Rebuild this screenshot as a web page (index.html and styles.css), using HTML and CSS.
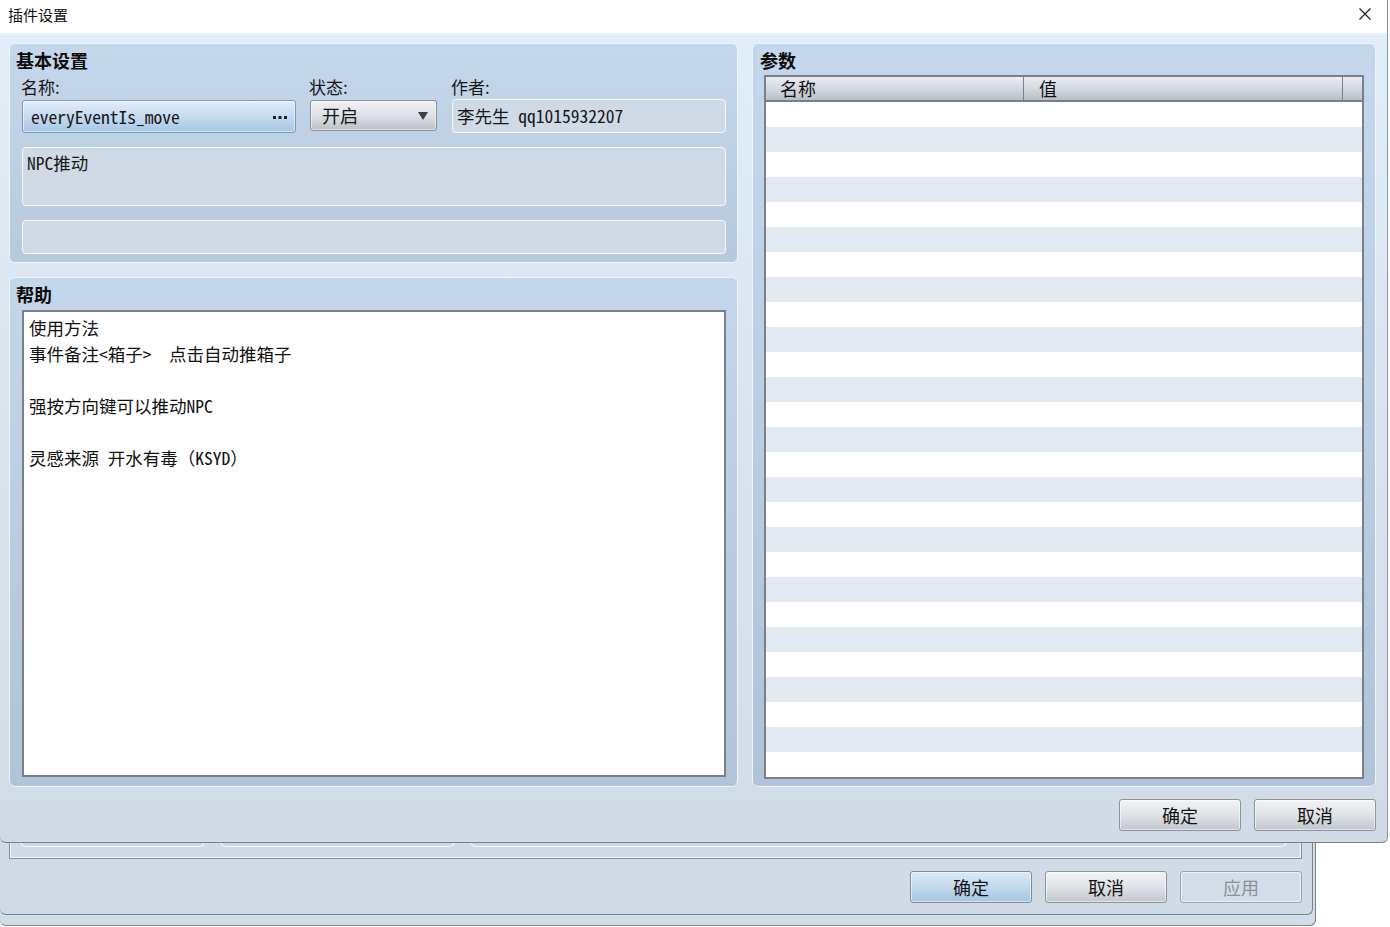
FILE: index.html
```html
<!DOCTYPE html>
<html lang="zh-CN">
<head>
    <meta charset="UTF-8">
    <title>插件设置</title>
    <link rel="stylesheet" href="styles.css">
</head>
<body>
    <!-- windows lying under the plugin dialog -->
    <div class="window window-back"></div>
    <div class="window window-main">
        <div class="tab-panel">
            <div class="tab-box box-list"></div>
            <div class="tab-box box-info"></div>
            <div class="tab-box box-help"></div>
        </div>
        <div class="button-row">
            <button class="btn btn-default">确定</button>
            <button class="btn">取消</button>
            <button class="btn" disabled>应用</button>
        </div>
    </div>

    <div class="dialog">
        <div class="titlebar">
            <span class="title">插件设置</span>
            <svg class="close" width="14" height="14" viewBox="0 0 14 14">
                <path d="M1.5 1.5 L12.5 12.5 M12.5 1.5 L1.5 12.5" stroke="#1f1f1f" stroke-width="1.2" fill="none"/>
            </svg>
        </div>

        <div class="dialog-body">
            <div class="columns">
                <div class="left-col">
                    <section class="group group-basic">
                        <h2 class="group-title">基本设置</h2>
                        <div class="fields">
                            <div class="field">
                                <label>名称:</label>
                                <div class="name-input">
                                    <span class="mono">everyEventIs_move</span>
                                    <svg class="dots" width="14" height="3" viewBox="0 0 14 3">
                                        <rect x="0" y="0" width="3" height="3" fill="#222"/>
                                        <rect x="5.5" y="0" width="3" height="3" fill="#222"/>
                                        <rect x="11" y="0" width="3" height="3" fill="#222"/>
                                    </svg>
                                </div>
                            </div>
                            <div class="field">
                                <label>状态:</label>
                                <div class="select">
                                    <span>开启</span>
                                    <svg class="arrow" width="10" height="8" viewBox="0 0 10 8">
                                        <polygon points="0,0 10,0 5,8" fill="#3b4047"/>
                                    </svg>
                                </div>
                            </div>
                            <div class="field">
                                <label>作者:</label>
                                <div class="text-box author mono">李先生 qq1015932207</div>
                            </div>
                        </div>
                        <div class="text-box desc mono">NPC推动</div>
                        <div class="text-box extra"></div>
                    </section>

                    <section class="group group-help">
                        <h2 class="group-title">帮助</h2>
                        <div class="help-text mono">使用方法
事件备注&lt;箱子&gt;<span class="fw">　</span>点击自动推箱子

强按方向键可以推动NPC

灵感来源 开水有毒<span class="fw">（</span>KSYD<span class="fw">）</span></div>
                    </section>
                </div>

                <section class="group group-params">
                    <h2 class="group-title">参数</h2>
                    <div class="param-table">
                        <div class="param-head">
                            <div class="head-cell col-name">名称</div>
                            <div class="head-cell col-value">值</div>
                            <div class="head-cell col-end"></div>
                        </div>
                        <div class="param-rows">
                            <div class="param-row"></div>
                            <div class="param-row"></div>
                            <div class="param-row"></div>
                            <div class="param-row"></div>
                            <div class="param-row"></div>
                            <div class="param-row"></div>
                            <div class="param-row"></div>
                            <div class="param-row"></div>
                            <div class="param-row"></div>
                            <div class="param-row"></div>
                            <div class="param-row"></div>
                            <div class="param-row"></div>
                            <div class="param-row"></div>
                            <div class="param-row"></div>
                            <div class="param-row"></div>
                            <div class="param-row"></div>
                            <div class="param-row"></div>
                            <div class="param-row"></div>
                            <div class="param-row"></div>
                            <div class="param-row"></div>
                            <div class="param-row"></div>
                            <div class="param-row"></div>
                            <div class="param-row"></div>
                            <div class="param-row"></div>
                            <div class="param-row"></div>
                            <div class="param-row"></div>
                            <div class="param-row"></div>
                        </div>
                    </div>
                </section>
            </div>

            <div class="dialog-buttons">
                <button class="btn">确定</button>
                <button class="btn">取消</button>
            </div>
        </div>
    </div>
</body>
</html>
```

FILE: styles.css
```css
* {
    margin: 0;
    padding: 0;
    box-sizing: border-box;
}
html, body {
    width: 100%;
    height: 100%;
    overflow: hidden;
}
body {
    position: relative;
    background: #ffffff;
    font-family: "Noto Sans CJK SC", "Noto Sans", sans-serif;
    color: #161616;
}

/* half-width latin, like the editor's gothic font */
.mono {
    font-family: "Noto Sans CJK JP", "Noto Sans CJK SC", sans-serif;
    font-feature-settings: "hwid" 1;
    font-size: 17.5px;
}
/* full-width space and brackets stay full width */
.mono .fw {
    font-feature-settings: normal;
}

/* ---------- windows behind ---------- */
.window {
    position: absolute;
    left: 0;
    top: 0;
    border-right: 1px solid #7e838a;
    border-bottom: 1px solid #7e838a;
    border-radius: 0 0 6px 6px;
}
.window-back {
    width: 1316px;
    height: 926px;
    background: #d3dde8;
}
.window-main {
    width: 1313px;
    height: 915px;
    background: #d0dbe6;
    display: flex;
    flex-direction: column;
}
.tab-panel {
    flex: 1;
    margin: 0 10px 0 9px;
    border: 1px solid #868c94;
    border-top: none;
    box-shadow: inset 0 -1px 0 #f3f7fb, inset 1px 0 0 #f3f7fb, inset -1px 0 0 #f3f7fb;
    display: flex;
    align-items: flex-end;
    gap: 15px;
    padding: 0 14px 11px 10px;
}
.tab-box {
    height: 120px;
    border: 1px solid #f4f8fc;
    border-top: none;
    border-radius: 0 0 6px 6px;
    background: #c9d7e5;
}
.box-list { width: 185px; }
.box-info { width: 235px; }
.box-help { flex: 1; }
.button-row {
    display: flex;
    justify-content: flex-end;
    gap: 13px;
    padding: 12px 10px 11px 0;
}

/* ---------- buttons ---------- */
.btn {
    width: 122px;
    height: 32px;
    border: 1px solid #8d939a;
    border-radius: 3px;
    background: linear-gradient(#f1f3f6, #dfe3e7 50%, #c2c7cd);
    box-shadow: inset 0 0 0 1px rgba(255, 255, 255, 0.55);
    font-family: "Noto Sans CJK SC", sans-serif;
    font-size: 18px;
    line-height: 30px;
    color: #141414;
}
.btn-default {
    border-color: #7f8c99;
    background: linear-gradient(#dceaf8, #c3d9ef 50%, #a5c3e3);
}
.btn:disabled {
    background: #d2dde8;
    border-color: #9ba2aa;
    color: #8b9098;
}

/* ---------- plugin dialog ---------- */
.dialog {
    position: absolute;
    left: 0;
    top: 0;
    width: 1388px;
    height: 843px;
    border-right: 1px solid #8c939b;
    border-bottom: 1px solid #7b8088;
    border-radius: 0 0 6px 6px;
    background: linear-gradient(#e3eefb, #d0dbe6);
    display: flex;
    flex-direction: column;
    overflow: hidden;
}
.titlebar {
    height: 33px;
    background: #ffffff;
    display: flex;
    align-items: center;
    justify-content: space-between;
    padding: 0 15px 5px 8px;
}
.title {
    font-size: 15px;
    color: #111;
}
.dialog-body {
    flex: 1;
    padding: 10px 11px 11px 9px;
    display: flex;
    flex-direction: column;
}
.columns {
    height: 744px;
    display: flex;
    gap: 14px;
}
.left-col {
    width: 729px;
    display: flex;
    flex-direction: column;
    gap: 14px;
}

/* group boxes */
.group {
    border: 1px solid #eef4fb;
    border-radius: 6px;
    padding: 0 11px 8px 12px;
    background: linear-gradient(#c5d7ec, #b2c6db);
}
.group-title {
    margin: 4px 0 0 -6px;
    font-size: 18px;
    font-weight: bold;
    line-height: 24px;
    color: #0c0c0c;
}
.group-basic {
    height: 220px;
    background: linear-gradient(#c5d7eb, #b7cadd);
}
.group-help {
    height: 510px;
    padding-bottom: 9px;
    background: linear-gradient(#c4d6ea, #afc3d9);
}
.group-params {
    width: 624px;
    padding: 0 11px 7px 11px;
    background: linear-gradient(#c5d7ec, #afc3d9);
}
.group-params .group-title {
    margin-left: -4px;
}

/* basic settings */
.fields {
    display: grid;
    grid-template-columns: 274px 128px 1fr;
    column-gap: 14px;
    margin-top: 5px;
}
.field label {
    display: block;
    font-size: 17px;
    line-height: 20px;
    margin-left: -1px;
    color: #151515;
}
.name-input {
    margin-top: 3px;
    height: 33px;
    border: 1px solid #7b99ba;
    border-radius: 3px;
    background: linear-gradient(#e2edf9, #c8dcf0 45%, #a9c6e5);
    box-shadow: inset 0 0 0 1px rgba(255, 255, 255, 0.5);
    display: flex;
    align-items: center;
    justify-content: space-between;
    padding: 0 8px 0 8px;
    line-height: 31px;
}
.dots {
    margin-top: 1px;
}
.select {
    margin-top: 3px;
    width: 127px;
    height: 31px;
    border: 1px solid #8a9098;
    border-radius: 3px;
    background: linear-gradient(#eff2f5, #dde1e6 50%, #bcc1c8);
    box-shadow: inset 0 0 0 1px rgba(255, 255, 255, 0.5);
    display: flex;
    align-items: center;
    justify-content: space-between;
    padding: 0 8px 0 11px;
    font-size: 18px;
    line-height: 29px;
}
.text-box {
    border: 1px solid #f5f8fc;
    border-radius: 4px;
    background: #cfdae6;
}
.author {
    margin-top: 2px;
    height: 34px;
    padding-left: 4px;
    line-height: 32px;
}
.desc {
    margin-top: 14px;
    height: 59px;
    padding: 2px 4px;
    line-height: 26px;
}
.extra {
    margin-top: 14px;
    height: 34px;
}

/* help text */
.help-text {
    margin-top: 4px;
    height: 467px;
    border: 2px solid #7a7f88;
    background: #ffffff;
    padding: 3px 5px;
    line-height: 26px;
    white-space: pre;
    color: #111;
}

/* parameter table */
.param-table {
    margin-top: 3px;
    width: 600px;
    height: 704px;
    border: 2px solid #7a7f88;
    background: #ffffff;
}
.param-head {
    display: flex;
    height: 25px;
    border-bottom: 2px solid #7a7f88;
    background: linear-gradient(#e9edf2, #d3d9e0 50%, #b8bfc8);
}
.head-cell {
    font-size: 18px;
    line-height: 23px;
    padding-left: 14px;
    color: #111;
}
.col-name {
    width: 258px;
    border-right: 1px solid #7a7f88;
}
.col-value {
    width: 319px;
    padding-left: 15px;
    border-right: 1px solid #7a7f88;
}
.col-end {
    flex: 1;
}
.param-row {
    height: 25px;
}
.param-row:nth-child(even) {
    background: #e2e9f0;
}

.dialog-buttons {
    display: flex;
    justify-content: flex-end;
    gap: 13px;
    margin-top: 12px;
}
```
